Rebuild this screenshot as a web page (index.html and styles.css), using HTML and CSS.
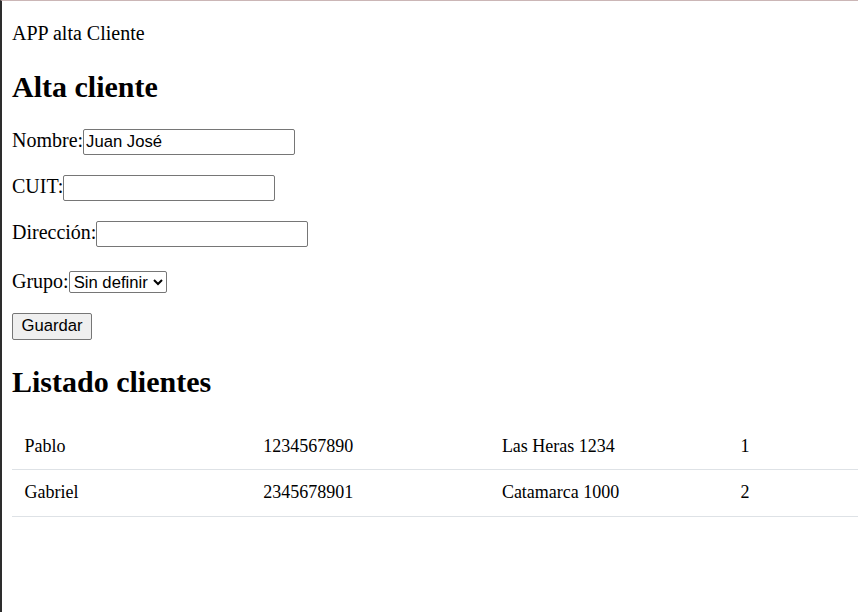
FILE: index.html
```html
<!DOCTYPE html>
<html lang="es">
<head>
<meta charset="utf-8">
<title>APP alta Cliente</title>
<link rel="stylesheet" href="styles.css">
</head>
<body>
<div class="page">
  <div class="app-title">APP alta Cliente</div>
  <h2 class="heading">Alta cliente</h2>
  <form class="form">
    <p class="field"><label for="nombre">Nombre:</label><input id="nombre" class="text-input" type="text" value="Juan José"></p>
    <p class="field"><label for="cuit">CUIT:</label><input id="cuit" class="text-input" type="text"></p>
    <p class="field"><label for="direccion">Dirección:</label><input id="direccion" class="text-input" type="text"></p>
    <p class="field field-select"><label for="grupo">Grupo:</label><select id="grupo" class="select"><option>Sin definir</option><option>1</option><option>2</option></select></p>
    <p class="field"><button type="button" class="button">Guardar</button></p>
  </form>
  <h2 class="heading">Listado clientes</h2>
  <table class="clients">
    <colgroup>
      <col class="col">
      <col class="col">
      <col class="col">
      <col>
    </colgroup>
    <tbody>
      <tr><td>Pablo</td><td>1234567890</td><td>Las Heras 1234</td><td>1</td></tr>
      <tr><td>Gabriel</td><td>2345678901</td><td>Catamarca 1000</td><td>2</td></tr>
    </tbody>
  </table>
</div>
</body>
</html>
```
FILE: styles.css
```css
html, body {
  margin: 0;
  padding: 0;
  overflow: hidden;
  background: #ffffff;
}

body {
  font-family: "Liberation Serif", "Times New Roman", serif;
  font-size: 20px;
  color: #000000;
}

.page {
  box-sizing: border-box;
  min-height: 100vh;
  border-top: 1px solid #cbb6b6;
  border-left: 2px solid #2d2d2d;
  padding: 10px 0 10px 10px;
  display: flow-root;
}

.app-title {
  margin-top: 11px;
  line-height: 23px;
}

.heading {
  font-size: 30px;
  line-height: 34.5px;
  font-weight: bold;
  margin: 24.9px 0;
}

.form {
  margin: 0;
}

.field {
  display: flex;
  align-items: baseline;
  margin: 20px 0;
  line-height: 23px;
}

.field-select {
  padding-top: 3px;
}

.text-input {
  box-sizing: border-box;
  width: 212px;
  height: 25.6px;
  margin: 0;
  border: 1px solid #767676;
  border-radius: 2px;
  padding: 1px 2px;
  font-family: "Liberation Sans", Arial, sans-serif;
  font-size: 16.67px;
  color: #000000;
  background: #ffffff;
}

.select {
  box-sizing: border-box;
  width: 98px;
  height: 22px;
  margin: 0;
  border: 1px solid #767676;
  border-radius: 2px;
  padding: 0;
  font-family: "Liberation Sans", Arial, sans-serif;
  font-size: 16.67px;
  line-height: 20px;
  color: #000000;
  background: #ffffff;
}

.button {
  box-sizing: border-box;
  width: 80px;
  height: 27px;
  margin: 0;
  border: 1px solid #767676;
  border-radius: 2px;
  background: #efefef;
  padding: 1px 7px;
  font-family: "Liberation Sans", Arial, sans-serif;
  font-size: 16.67px;
  color: #000000;
}

.clients {
  width: 100%;
  border-collapse: collapse;
  table-layout: fixed;
  font-size: 18px;
}

.col {
  width: 238.7px;
}

.clients td {
  padding: 12px 12.5px;
  line-height: 21.5px;
  border-bottom: 1px solid #dee2e6;
  text-align: left;
  white-space: nowrap;
}
```
